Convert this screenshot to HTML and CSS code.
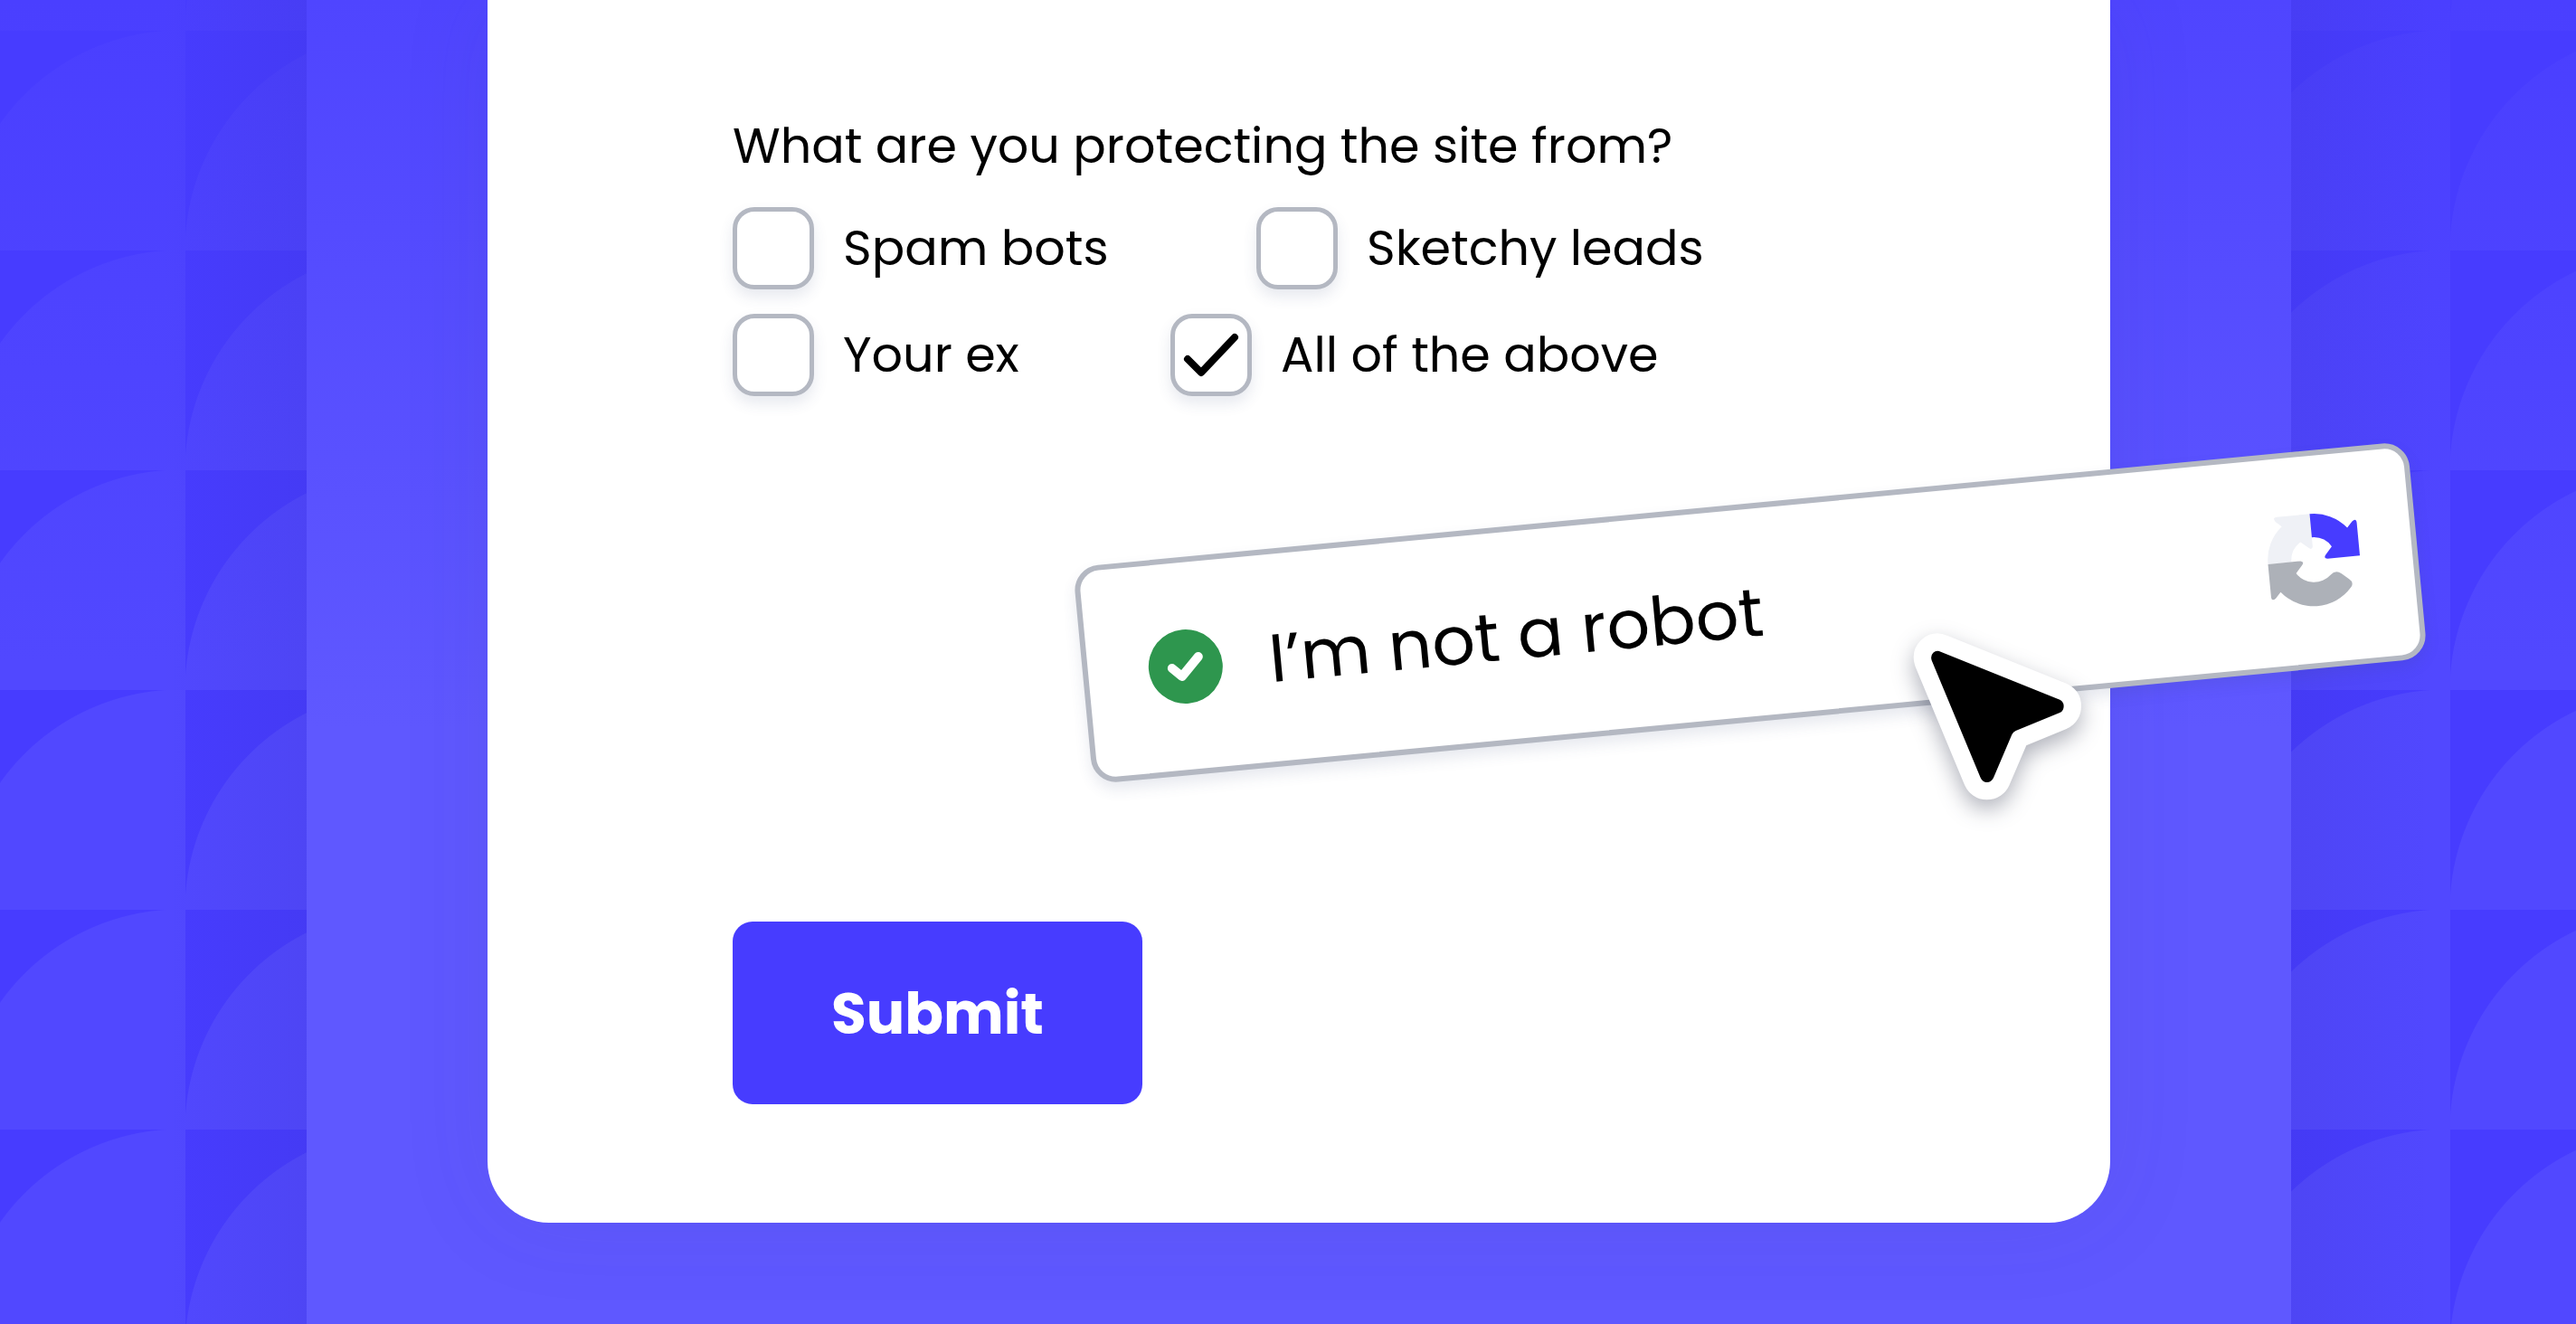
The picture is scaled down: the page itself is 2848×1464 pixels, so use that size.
FILE: index.html
```html
<!DOCTYPE html>
<html lang="en">
<head>
  <meta charset="UTF-8">
  <meta name="viewport" content="width=device-width, initial-scale=1.0">
  <title>Form</title>
  <link rel="stylesheet" href="styles.css">
</head>
<body>

  <div class="side side-left"></div>

  <main class="panel">
    <form class="card">
      <p class="question">What are you protecting the site from?</p>

      <div class="options">
        <label class="option">
          <span class="box"><input type="checkbox" name="threat" value="bots"></span>
          Spam bots
        </label>
        <label class="option">
          <span class="box"><input type="checkbox" name="threat" value="leads"></span>
          Sketchy leads
        </label>
      </div>

      <div class="options options-short">
        <label class="option">
          <span class="box"><input type="checkbox" name="threat" value="ex"></span>
          Your ex
        </label>
        <label class="option">
          <span class="box">
            <input type="checkbox" name="threat" value="all" checked>
            <svg viewBox="0 0 90 90"><path d="M19 50 L34 65 L71 26" fill="none" stroke="#000" stroke-width="8" stroke-linecap="round" stroke-linejoin="round"/></svg>
          </span>
          All of the above
        </label>
      </div>

      <div class="captcha">
        <label class="robot">
          <span class="tick">
            <input type="checkbox" name="robot" checked>
            <svg viewBox="0 0 82 82"><path d="M26 43 L37 52 L55 30" fill="none" stroke="#fff" stroke-width="10" stroke-linecap="round" stroke-linejoin="round"/></svg>
          </span>
          I’m not a robot
        </label>
        <svg class="arrows" viewBox="-54 -54 108 108">
          <path fill="#eff1f6" d="M-51 0 A51 51 0 0 1 -32 -40 L-38.5 -46 Q-42 -51 -36 -51 L0 -51 L0 -15 Q-1 -10 -5 -14 L-13 -21 A25 25 0 0 0 -25 0 Z"/>
          <path fill="#473cff" d="M0 -51 A51 51 0 0 1 40 -32 L46 -38.5 Q51 -42 51 -36 L51 0 L15 0 Q10 -1 14 -5 L21 -13 A25 25 0 0 0 0 -25 Z"/>
          <path fill="#adb1b8" d="M-51 0 L-15 0 Q-10 1 -14 5 L-21 13 A25 25 0 0 0 17 18 Q23 13 29 18 L37 25 Q42 29 38 34 A51 51 0 0 1 -40 32 L-46 38.5 Q-51 42 -51 36 Z"/>
        </svg>
      </div>

      <button type="submit" class="submit">Submit</button>

      <svg class="cursor" viewBox="0 0 780 780">
        <path class="cursor-edge" d="M197 182 L592 341 Q605 348 605 362 Q605 378 592 384 L446 444 Q437 448 433 457 L372 600 Q365 615 350 615 Q336 615 329 600 L167 211 Q162 195 172 185 Q183 176 197 182 Z"/>
        <path d="M197 182 L592 341 Q605 348 605 362 Q605 378 592 384 L446 444 Q437 448 433 457 L372 600 Q365 615 350 615 Q336 615 329 600 L167 211 Q162 195 172 185 Q183 176 197 182 Z"/>
      </svg>
    </form>
  </main>

  <div class="side side-right"></div>

</body>
</html>
```
FILE: styles.css
```css
* {
  box-sizing: border-box;
}
body {
  margin: 0;
  display: flex;
  min-height: 100vh;
  overflow-x: hidden;
  font-family: Poppins, Inter, sans-serif;
  color: #000;
  background-color: #473cff;
}

/* Quarter circle pattern on both sides */
.side {
  flex-shrink: 0;
}
.side-left {
  width: 339px;
  background-image:
    linear-gradient(to left, rgba(40, 40, 120, 0.08), rgba(40, 40, 120, 0) 160px),
    radial-gradient(circle at 243px 243px, transparent 243px, #473cff 244px),
    linear-gradient(#4a3fff, #5148ff 50%);
  background-size: auto, 249px 243px, auto;
  background-position: 0 0, 205px 34px, 0 0;
}
.side-right {
  width: 315px;
  background-image:
    linear-gradient(to right, rgba(40, 40, 120, 0.08), rgba(40, 40, 120, 0) 160px),
    radial-gradient(circle at 243px 243px, transparent 243px, #473cff 244px),
    linear-gradient(#4a3fff, #5148ff 50%);
  background-size: auto, 249px 243px, auto;
  background-position: 0 0, 176px 34px, 0 0;
}

.panel {
  flex: 1;
  min-width: 0;
  padding: 0 200px 112px;
  background-image: linear-gradient(#4f45ff, #5f58ff 55%);
}
.card {
  position: relative;
  padding: 121px 271px 131px;
  background-color: #fff;
  border-radius: 0 0 68px 68px;
  box-shadow: 0 0 100px rgba(60, 60, 140, 0.1);
}

.question {
  margin: 0 0 28px;
  font-size: 54px;
  line-height: 80px;
  white-space: nowrap;
}
.options {
  display: grid;
  grid-template-columns: 579px auto;
  margin-bottom: 27px;
}
.options-short {
  grid-template-columns: 484px auto;
}
.option {
  display: flex;
  align-items: center;
  gap: 32px;
  font-size: 54px;
  line-height: 91px;
  white-space: nowrap;
}
.box, .tick {
  display: grid;
  flex-shrink: 0;
}
.box > *, .tick > * {
  grid-area: 1 / 1;
}
.box {
  width: 90px;
  height: 91px;
}
.box input {
  appearance: none;
  width: 90px;
  height: 91px;
  margin: 0;
  border: 5px solid #b4b8c2;
  border-radius: 24px;
  background-color: #fff;
  box-shadow: 0 8px 16px rgba(60, 70, 120, 0.12);
}
.box svg, .tick svg {
  z-index: 1;
  pointer-events: none;
}

.captcha {
  display: flex;
  align-items: center;
  justify-content: space-between;
  width: 1482px;
  height: 241px;
  margin: 119px 0 221px 384px;
  padding: 0 55px 0 67px;
  background-color: #fff;
  border: 6px solid #b4b8c2;
  border-radius: 28px;
  box-shadow: 0 8px 16px rgba(60, 70, 120, 0.12);
  transform: rotate(-5.4deg);
}
.robot {
  display: flex;
  align-items: center;
  gap: 52px;
  font-size: 75px;
  white-space: nowrap;
}
.tick {
  width: 82px;
  height: 82px;
}
.tick input {
  appearance: none;
  width: 82px;
  height: 82px;
  margin: 0;
  border-radius: 50%;
  background-color: #2e964e;
}
.tick svg {
  transform: rotate(5.4deg);
}
.arrows {
  width: 108px;
  height: 108px;
}

.submit {
  display: block;
  width: 453px;
  height: 202px;
  padding: 2px 0 0;
  border: none;
  border-radius: 22px;
  background-color: #473cff;
  color: #fff;
  font-family: inherit;
  font-size: 63px;
  font-weight: bold;
  cursor: pointer;
}

.cursor {
  position: absolute;
  left: 1541px;
  top: 660px;
  width: 260px;
  height: 260px;
  overflow: visible;
  filter: drop-shadow(0 10px 12px rgba(30, 35, 60, 0.35));
}
.cursor-edge {
  fill: #fff;
  stroke: #fff;
  stroke-width: 116px;
  stroke-linejoin: round;
}
```
